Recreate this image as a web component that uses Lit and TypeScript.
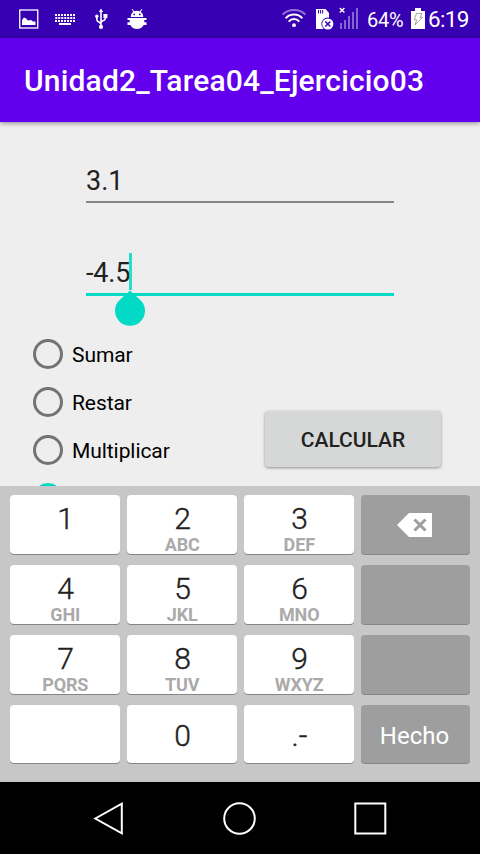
import { LitElement, html, css, svg, nothing } from "lit";
import { customElement, property } from "lit/decorators.js";

@customElement("status-bar")
class StatusBar extends LitElement {
  static styles = css`
    :host { display: flex; align-items: center; justify-content: space-between; height: 38px; background: #3700b3; color: #fff; padding: 0 11px 0 19px; box-sizing: border-box; }
    svg { display: block; flex: none; }
    .group { display: flex; align-items: center; height: 38px; }
    .left { gap: 15px; }
    .keys { margin: 0 -1px 0 1px; }
    .wifi { margin-right: 9px; }
    .sd { margin-right: 5px; }
    .percent { width: 38px; margin: 2px 6px 0 8px; font-size: 20px; letter-spacing: -0.2px; line-height: 24px; white-space: nowrap; }
    .clock { width: 41px; margin: 0 0 0 3px; font-size: 22.5px; letter-spacing: -0.7px; line-height: 26px; white-space: nowrap; }
  `;

  render() {
    const keys = [0, 1, 2].map((r) =>
      [0, 1, 2, 3, 4, 5, 6].map((c) => svg`<rect x=${c * 3 + (r === 1 ? 0.3 : 0)} y=${r * 3} width="2" height="2" />`)
    );
    return html`
      <div class="group left">
        <svg width="20" height="38" viewBox="0 0 20 38" fill="#fff">
          <rect x="0.75" y="10" width="18" height="18" fill="none" stroke="#fff" stroke-width="1.3" />
          <path d="M3 25V20L5 17.5L7 18.5L9 20.5L12 20L14 21.5H16.5V25Z" />
        </svg>
        <svg class="keys" width="20" height="38" viewBox="0 0 20 38" fill="#fff">
          <g transform="translate(0 14)">${keys}<rect x="4" y="9" width="12" height="2" /></g>
        </svg>
        <svg width="22" height="38" viewBox="0 0 22 38" fill="none" stroke="#fff" stroke-width="1.6">
          <g transform="translate(1 0)">
            <path d="M11 12V26M6.8 17V19.5Q7 21.5 9 22L11 24M15.4 17V18.5Q15 20.3 13 20.7L11 22" />
            <path d="M11 8.6L13.2 12H8.8Z" fill="#fff" stroke="none" />
            <circle cx="6.8" cy="16.2" r="1.7" fill="#fff" stroke="none" />
            <rect x="13.4" y="14" width="4" height="4" fill="#fff" stroke="none" />
            <circle cx="11" cy="26.9" r="2.1" fill="#fff" stroke="none" />
          </g>
        </svg>
        <svg width="22" height="38" viewBox="0 0 22 38" fill="#fff">
          <path d="M4.7 17Q4.8 13.5 7.3 11.8L5.7 9.5L6.4 9L8.2 11.3Q11 10.4 13.8 11.3L15.6 9L16.3 9.5L14.7 11.8Q17.2 13.5 17.3 17Z" />
          <circle cx="8.2" cy="14.4" r="0.9" fill="#3700b3" /><circle cx="13.8" cy="14.4" r="0.9" fill="#3700b3" />
          <path d="M1.5 18H20.5V20H18.3V22.2H20.5V25H17.6Q15.7 29 11 29Q6.3 29 4.4 25H1.5V22.2H3.7V20H1.5Z" />
        </svg>
      </div>
      <div class="group">
        <svg class="wifi" width="26" height="38" viewBox="0 0 26 38" fill="none" stroke="#fff" stroke-width="1.9">
          <path d="M1.5 14.7Q6 10 13 10Q20 10 24.5 14.7" opacity="0.45" />
          <path d="M4.6 18.3Q8 14.5 13 14.5Q18 14.5 21.4 18.3M7.7 21.7Q10 19 13 19Q16 19 18.3 21.7" />
          <circle cx="13" cy="25.2" r="1.9" fill="#fff" stroke="none" />
        </svg>
        <svg class="sd" width="18" height="38" viewBox="0 0 18 38">
          <path d="M0 9H9.5L13 13V29H0Z" fill="#fff" />
          <path d="M2.5 10V13.5M4.6 10V13.5M6.7 10V13.5" stroke="#3700b3" stroke-width="1" />
          <circle cx="11.8" cy="24" r="6.4" fill="#3700b3" /><circle cx="11.8" cy="24" r="5.6" fill="#fff" />
          <path d="M9.3 21.5L14.3 26.5M14.3 21.5L9.3 26.5" stroke="#3700b3" stroke-width="1.5" />
        </svg>
        <svg width="20" height="38" viewBox="0 0 20 38" fill="#8565d1">
          <path d="M.8 8L5.4 12.6M5.4 8L.8 12.6" stroke="#fff" stroke-width="1.4" />
          <rect x="1" y="23" width="2" height="6" /><rect x="5" y="20" width="2" height="9" />
          <rect x="9" y="16" width="2" height="13" /><rect x="13" y="12" width="2" height="17" /><rect x="17" y="8" width="2" height="21" />
        </svg>
        <span class="percent">64%</span>
        <svg width="14" height="38" viewBox="0 0 14 38">
          <path d="M4 8H10V11H14V29H0V11H4Z" fill="#fff" />
          <path d="M5.5 13.5H11L8.8 17.5H11.3L4 25L5.7 19.8H3.2Z" fill="none" stroke="#a5a5a5" stroke-width="1" />
        </svg>
        <span class="clock">6:19</span>
      </div>
    `;
  }
}

@customElement("text-field")
class TextField extends LitElement {
  @property() value = "";
  @property({ type: Boolean, reflect: true }) focused = false;

  static styles = css`
    :host { display: flex; flex-direction: column; justify-content: flex-end; width: 308px; color: #212121; }
    .value { position: relative; align-self: flex-start; font-size: 27px; line-height: 32px; }
    :host([focused]) .value { letter-spacing: -0.2px; }
    .line { margin-top: 4px; height: 2px; background: #868686; }
    :host([focused]) .line { height: 3px; background: #03dac5; }
    .caret { position: absolute; right: -1.5px; top: -4px; width: 3px; height: 37px; background: #03dac5; opacity: 0.85; }
    .handle { position: absolute; right: -15px; top: 33px; }
  `;

  render() {
    return html`
      <div class="value">${this.value}${this.focused
        ? html`<span class="caret"></span>
            <svg class="handle" width="30" height="36" viewBox="0 0 30 36">
              <path d="M15 .5L25.6 10.2A15 15 0 1 1 4.4 10.2Z" fill="#03dac5" />
            </svg>`
        : nothing}</div>
      <div class="line"></div>
    `;
  }
}

@customElement("radio-option")
class RadioOption extends LitElement {
  @property() label = "";
  @property({ type: Boolean, reflect: true }) checked = false;

  static styles = css`
    :host { display: flex; align-items: center; gap: 9px; height: 48px; flex: none; font-size: 21px; color: #000; }
    .ring { box-sizing: border-box; width: 30px; height: 30px; border: 3px solid #737373; border-radius: 50%; }
    :host([checked]) .ring { border-color: #03dac5; }
    .label { line-height: 26px; margin-top: 2px; letter-spacing: -0.07px; }
  `;

  render() {
    return html`<span class="ring"></span>${this.label ? html`<span class="label">${this.label}</span>` : nothing}`;
  }
}

@customElement("pad-key")
class PadKey extends LitElement {
  @property() main = "";
  @property() sub = "";
  @property({ reflect: true }) kind = "digit";

  static styles = css`
    :host { display: flex; flex-direction: column; align-items: center; box-sizing: border-box; background: #fff; border-radius: 4px; box-shadow: 0 1px 0 #858585; color: #212121; }
    :host([kind="action"]) { background: #9e9e9e; color: #fff; }
    .main { font-size: 30px; font-weight: 300; -webkit-text-stroke: 0.4px currentColor; line-height: 36px; margin: 6px 0 0 1px; }
    .sub { font-size: 18px; font-weight: 700; line-height: 20px; margin: -2px 0 0 0.5px; letter-spacing: -0.1px; color: #aaa; }
    :host([kind="plain"]) .main { margin-top: 13px; }
    :host([kind="action"]) .main { font-size: 24px; font-weight: 400; -webkit-text-stroke: 0; margin: 13px 2px 0 0; }
    svg { display: block; margin: 18px 2px 0 0; }
  `;

  render() {
    if (this.main === "⌫") {
      return html`<svg width="35" height="24" viewBox="0 0 35 24">
        <path d="M0 12L12 0H35V24H12Z" fill="#fff" />
        <path d="M17.5 6.5L28.5 17.5M28.5 6.5L17.5 17.5" stroke="#9e9e9e" stroke-width="3" />
      </svg>`;
    }
    return html`
      <span class="main">${this.main}</span>
      ${this.sub ? html`<span class="sub">${this.sub}</span>` : nothing}
    `;
  }
}

const KEYS: [string, string, string][] = [
  ["1", "", "digit"], ["2", "ABC", "digit"], ["3", "DEF", "digit"], ["⌫", "", "action"],
  ["4", "GHI", "digit"], ["5", "JKL", "digit"], ["6", "MNO", "digit"], ["", "", "action"],
  ["7", "PQRS", "digit"], ["8", "TUV", "digit"], ["9", "WXYZ", "digit"], ["", "", "action"],
  ["", "", "plain"], ["0", "", "plain"], [".-", "", "plain"], ["Hecho", "", "action"],
];

@customElement("app-root")
class AppRoot extends LitElement {
  static styles = css`
    :host { display: flex; flex-direction: column; width: 480px; height: 854px; overflow: hidden; background: #eee; font-family: Roboto, "Liberation Sans", sans-serif; }
    .appbar { height: 84px; flex: none; box-sizing: border-box; padding-left: 24px; display: flex; align-items: center; background: #6200ee; color: #fff; font-size: 30px; font-weight: 500; letter-spacing: 0.17px; box-shadow: 0 1px 5px rgba(0, 0, 0, 0.45); }
    .content { height: 364px; flex: none; overflow: hidden; }
    .field { margin-left: 86px; }
    .first { height: 81px; }
    .second { height: 93px; }
    .choices { display: flex; justify-content: space-between; align-items: flex-start; margin-top: 34px; padding: 0 39px 0 33px; }
    .button { display: flex; align-items: center; justify-content: center; width: 176px; height: 56px; margin-top: 81px; border-radius: 4px; background: #d6d8d7; color: #212121; font-size: 21px; font-weight: 500; box-shadow: 0 1px 3px rgba(0, 0, 0, 0.4); }
    .button span { margin-top: 2px; }
    .keyboard { height: 296px; flex: none; box-sizing: border-box; padding: 9px 10px 0; background: #c7c7c7; display: grid; grid-template-columns: 110px 110px 110px 109px; grid-template-rows: 59px 59px 59px 58px; gap: 11px 7px; align-content: start; }
    .nav { height: 72px; flex: none; background: #000; display: flex; align-items: center; justify-content: space-between; padding: 0 92px 0 93px; }
    .nav svg { display: block; }
    .appbar, .keyboard, .nav { z-index: 1; }
  `;

  render() {
    return html`
      <status-bar></status-bar>
      <div class="appbar">Unidad2_Tarea04_Ejercicio03</div>
      <div class="content">
        <text-field class="field first" value="3.1"></text-field>
        <text-field class="field second" value="-4.5" focused></text-field>
        <div class="choices">
          <div>
            <radio-option label="Sumar"></radio-option>
            <radio-option label="Restar"></radio-option>
            <radio-option label="Multiplicar"></radio-option>
            <radio-option checked></radio-option>
          </div>
          <div class="button"><span>CALCULAR</span></div>
        </div>
      </div>
      <div class="keyboard">
        ${KEYS.map(([main, sub, kind]) => html`<pad-key main=${main} sub=${sub} kind=${kind}></pad-key>`)}
      </div>
      <div class="nav">
        <svg width="32" height="36" viewBox="0 0 32 36" fill="none" stroke="#fff" stroke-width="2"><path d="M2.3 18.5L28.8 3.7V33.3Z" /></svg>
        <svg width="36" height="36" viewBox="0 0 36 36" fill="none" stroke="#fff" stroke-width="2"><circle cx="18.5" cy="18.5" r="15.3" /></svg>
        <svg width="36" height="36" viewBox="0 0 36 36" fill="none" stroke="#fff" stroke-width="2"><rect x="3.3" y="3.5" width="30" height="30" /></svg>
      </div>
    `;
  }
}
